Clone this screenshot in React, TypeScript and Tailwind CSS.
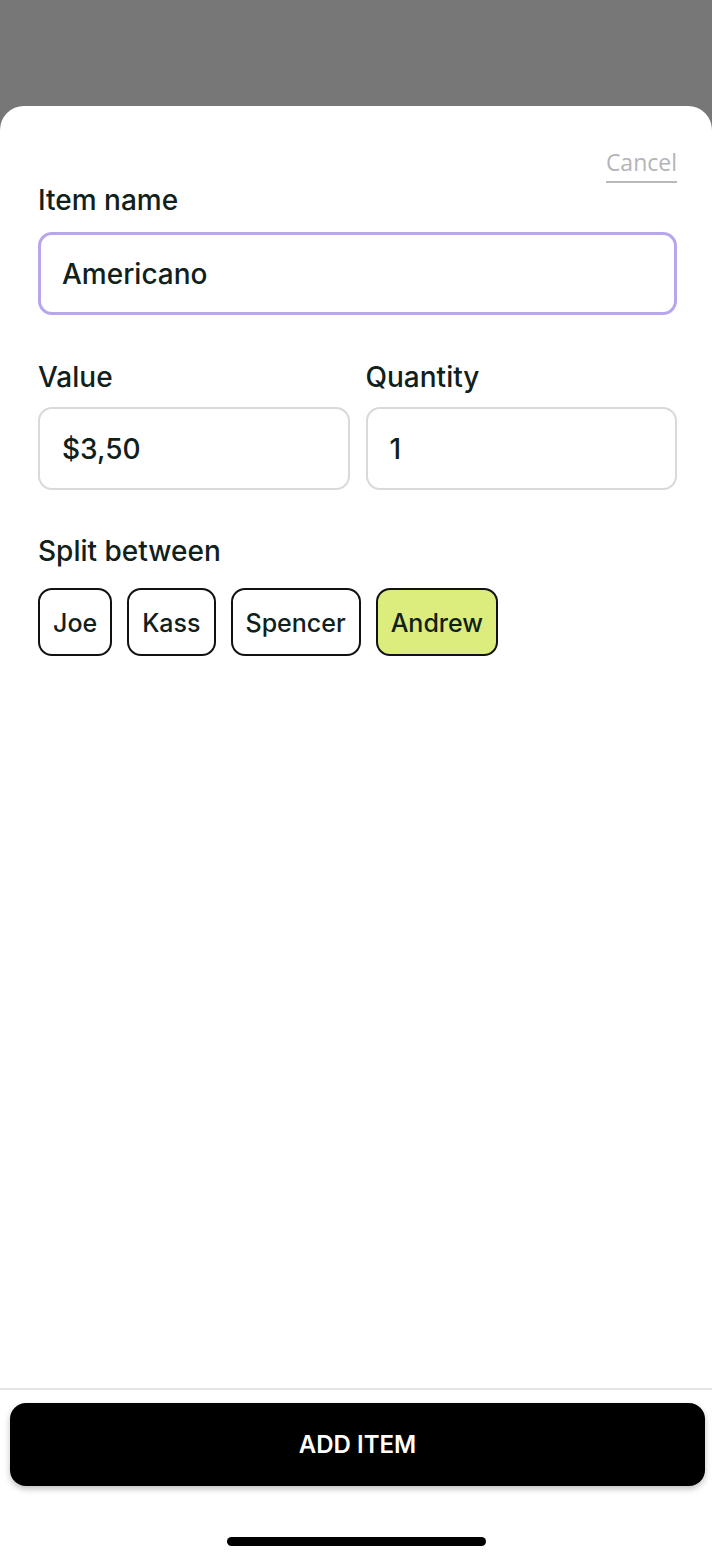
const people = [
  { name: 'Joe', selected: false },
  { name: 'Kass', selected: false },
  { name: 'Spencer', selected: false },
  { name: 'Andrew', selected: true },
];

const font = "font-['Inter','Liberation_Sans',sans-serif]";

export default function App() {
  return (
    <div className={`flex h-[1554px] w-[712px] flex-col bg-[#777777] ${font}`}>
      <div className="h-[106px] shrink-0" />
      <div className="flex flex-1 flex-col rounded-t-[24px] bg-white">
        <div className="flex flex-1 flex-col pl-[38px] pr-[35px] pt-[42px]">
          <div className="flex justify-end">
            <button className="border-b-2 border-[#b9b9bd] pb-[5px] font-['Open_Sans',sans-serif] text-[23px] leading-[28px] text-[#b4b4b8]">
              Cancel
            </button>
          </div>
          <label className="mt-[1px] text-[28px] font-medium leading-[32px] text-[#10201a]">Item name</label>
          <div className="mt-[16px] flex h-[83px] items-center rounded-[14px] border-[3px] border-[#b7a6ec] px-[21px]">
            <span className="text-[28px] font-medium text-[#10201a]">Americano</span>
          </div>

          <div className="mt-[46px] flex gap-[16px]">
            <div className="flex flex-1 flex-col">
              <label className="text-[28px] font-medium leading-[32px] text-[#10201a]">Value</label>
              <div className="mt-[14px] flex h-[83px] items-center rounded-[14px] border-2 border-[#d9d9d9] px-[22px]">
                <span className="text-[28px] font-medium text-[#10201a]">$3,50</span>
              </div>
            </div>
            <div className="flex flex-1 flex-col">
              <label className="text-[28px] font-medium leading-[32px] text-[#10201a]">Quantity</label>
              <div className="mt-[14px] flex h-[83px] items-center rounded-[14px] border-2 border-[#d9d9d9] px-[22px]">
                <span className="text-[28px] font-medium text-[#10201a]">1</span>
              </div>
            </div>
          </div>

          <label className="mt-[45px] text-[28px] font-medium leading-[32px] text-[#10201a]">Split between</label>
          <div className="mt-[21px] flex gap-[15px]">
            {people.map((p) => (
              <button
                key={p.name}
                className={`flex h-[68px] items-center rounded-[14px] border-2 border-[#111111] px-[13px] pt-[3px] text-[25px] font-medium text-[#10201a] ${
                  p.selected ? 'bg-[#dcec7d]' : 'bg-white'
                }`}
              >
                {p.name}
              </button>
            ))}
          </div>
        </div>

        <div className="border-t-2 border-[#e4e4e4] pt-[13px]">
          <button className="ml-[10px] mr-[7px] flex h-[83px] w-[695px] items-center justify-center rounded-[16px] bg-black text-[24px] font-semibold text-white shadow-[0_3px_6px_rgba(0,0,0,0.25)]">
            ADD ITEM
          </button>
          <div className="mt-[51px] flex justify-center pb-[8px]">
            <div className="h-[9px] w-[259px] rounded-full bg-black" />
          </div>
        </div>
      </div>
    </div>
  );
}
